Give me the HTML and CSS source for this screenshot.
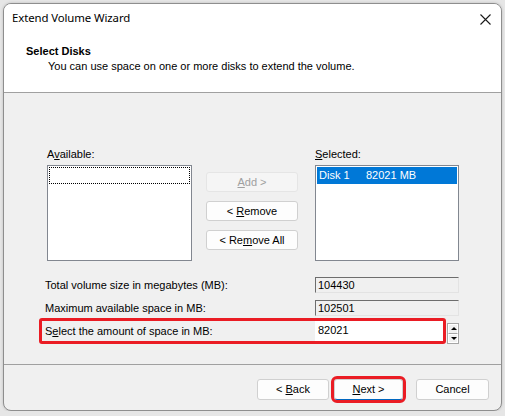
FILE: index.html
```html
<!DOCTYPE html>
<html lang="en">
<head>
    <meta charset="UTF-8">
    <title>Extend Volume Wizard</title>
    <link rel="stylesheet" href="styles.css">
</head>
<body>
    <div class="window">
        <div class="titlebar">
            <span class="title">Extend Volume Wizard</span>
            <svg class="close" width="11" height="11" viewBox="0 0 11 11">
                <path d="M0.5 0.5 L10.5 10.5 M10.5 0.5 L0.5 10.5" stroke="#1a1a1a" stroke-width="1.1" fill="none"/>
            </svg>
        </div>

        <div class="header">
            <div class="heading">Select Disks</div>
            <div class="subheading">You can use space on one or more disks to extend the volume.</div>
        </div>

        <div class="body">
            <div class="lists">
                <div class="list-col">
                    <div class="label">A<u>v</u>ailable:</div>
                    <div class="listbox">
                        <div class="focus-row"></div>
                    </div>
                </div>

                <div class="actions">
                    <button class="btn" disabled><u>A</u>dd &gt;</button>
                    <button class="btn">&lt; <u>R</u>emove</button>
                    <button class="btn">&lt; Re<u>m</u>ove All</button>
                </div>

                <div class="list-col">
                    <div class="label"><u>S</u>elected:</div>
                    <div class="listbox selected-list">
                        <div class="item selected"><span class="disk">Disk 1</span><span>82021 MB</span></div>
                    </div>
                </div>
            </div>

            <div class="rows">
                <div class="row">
                    <span class="row-label">Total volume size in megabytes (MB):</span>
                    <span class="field">104430</span>
                </div>
                <div class="row">
                    <span class="row-label">Maximum available space in MB:</span>
                    <span class="field">102501</span>
                </div>
                <div class="row row-input">
                    <span class="row-label">S<u>e</u>lect the amount of space in MB:</span>
                    <span class="field editable">82021</span>
                    <span class="spinner">
                        <span class="spin up"></span>
                        <span class="spin down"></span>
                    </span>
                    <span class="highlight"></span>
                </div>
            </div>
        </div>

        <div class="footer">
            <button class="btn back">&lt; <u>B</u>ack</button>
            <button class="btn next"><u>N</u>ext &gt;</button>
            <button class="btn cancel">Cancel</button>
        </div>
    </div>
</body>
</html>
```

FILE: styles.css
```css
html, body {
    margin: 0;
    padding: 0;
}
body {
    background: #e6e6e6;
    font-family: "Liberation Sans", Arial, sans-serif;
    font-size: 11px;
    line-height: 13px;
    color: #000;
    box-sizing: border-box;
    padding: 3px 0 0 3px;
}
*, *:before, *:after {
    box-sizing: inherit;
}
.window {
    width: 499px;
    height: 408px;
    border: 1px solid #8e8e8e;
    border-radius: 8px;
    background: #f0f0f0;
    box-shadow: 0 0 3px rgba(0, 0, 0, 0.18);
    display: flex;
    flex-direction: column;
    overflow: hidden;
}
.titlebar {
    background: #fff;
    display: flex;
    justify-content: space-between;
    align-items: flex-start;
    padding: 6px 10px 0 8px;
    height: 22px;
}
.title {
    font-family: "Noto Sans", sans-serif;
    font-size: 11.4px;
    line-height: 16px;
    letter-spacing: -0.1px;
}
.close {
    margin-top: 4px;
}
.header {
    background: #fff;
    padding: 19px 0 19px 22px;
    border-bottom: 1px solid #a0a0a0;
}
.heading {
    font-weight: bold;
}
.subheading {
    margin-top: 2px;
    padding-left: 22px;
}
.body {
    flex: 1;
    padding: 55px 0 0 43px;
    border-bottom: 1px solid #a0a0a0;
}
u {
    text-decoration-thickness: 1px;
    text-underline-offset: 1px;
}
.lists {
    display: flex;
    align-items: flex-start;
}
.label {
    margin-bottom: 4px;
}
.listbox {
    width: 145px;
    height: 96px;
    background: #fff;
    border: 1px solid #828790;
    padding: 1px;
}
.selected-list {
    width: 144px;
}
.focus-row {
    height: 17px;
    border: 1px dotted #000;
}
.item {
    height: 17px;
    padding: 2px 0 0 2px;
    display: flex;
}
.item.selected {
    background: #0078d7;
    color: #fff;
}
.disk {
    width: 47px;
}
.actions {
    display: flex;
    flex-direction: column;
    gap: 9px;
    margin: 24px 17px 0 14px;
}
.btn {
    font-family: "Liberation Sans", Arial, sans-serif;
    font-size: 11px;
    line-height: 13px;
    color: #000;
    background: #fdfdfd;
    border: 1px solid #d0d0d0;
    border-radius: 3px;
    height: 20px;
    width: 92px;
    padding: 0;
}
.btn:disabled {
    background: #f5f5f5;
    border-color: #e5e5e5;
    color: #a0a0a0;
}
.rows {
    margin: 16px 0 0 -2px;
    display: flex;
    flex-direction: column;
}
.row {
    display: flex;
    align-items: center;
    height: 16px;
}
.row + .row {
    margin-top: 7px;
}
.row-label {
    width: 270px;
}
.field {
    width: 144px;
    height: 16px;
    background: #f0f0f0;
    border: 1px solid;
    border-color: #6d6d6d #e3e3e3 #e3e3e3 #6d6d6d;
    padding: 1px 0 0 2px;
}
.row-input {
    position: relative;
    height: 20px;
    margin-top: 5px !important;
}
.field.editable {
    width: 129px;
    height: 20px;
    background: #fff;
    border: none;
    padding: 3px 0 0 3px;
}
.spinner {
    display: flex;
    flex-direction: column;
    width: 12px;
    height: 21px;
    margin: 2px 0 0 3px;
    border: 1px solid #a6a6a6;
    align-self: flex-start;
}
.spin {
    flex: 1;
    background: #f0f0f0;
    border: 1px solid #fff;
    position: relative;
}
.spin.up {
    border-bottom: 1px solid #a6a6a6;
}
.spin:after {
    content: "";
    position: absolute;
    left: 2px;
    top: 2px;
    border-left: 3px solid transparent;
    border-right: 3px solid transparent;
}
.spin.up:after {
    border-bottom: 3px solid #000;
}
.spin.down:after {
    border-top: 3px solid #000;
}
.highlight {
    position: absolute;
    left: -6px;
    top: -3px;
    width: 407px;
    height: 26px;
    border: 3px solid #ea1c24;
    border-radius: 3px;
    pointer-events: none;
}
.footer {
    height: 45px;
    display: flex;
    justify-content: flex-end;
    align-items: flex-start;
    padding: 14px 12px 0 0;
}
.footer .btn {
    height: 21px;
}
.back {
    width: 72px !important;
}
.next {
    width: 69px !important;
    margin-left: 5px;
    border-bottom: 1px solid #0067c0;
    outline: 3px solid #ea1c24;
    outline-offset: 0;
}
.cancel {
    width: 73px !important;
    margin-left: 13px;
}
```
